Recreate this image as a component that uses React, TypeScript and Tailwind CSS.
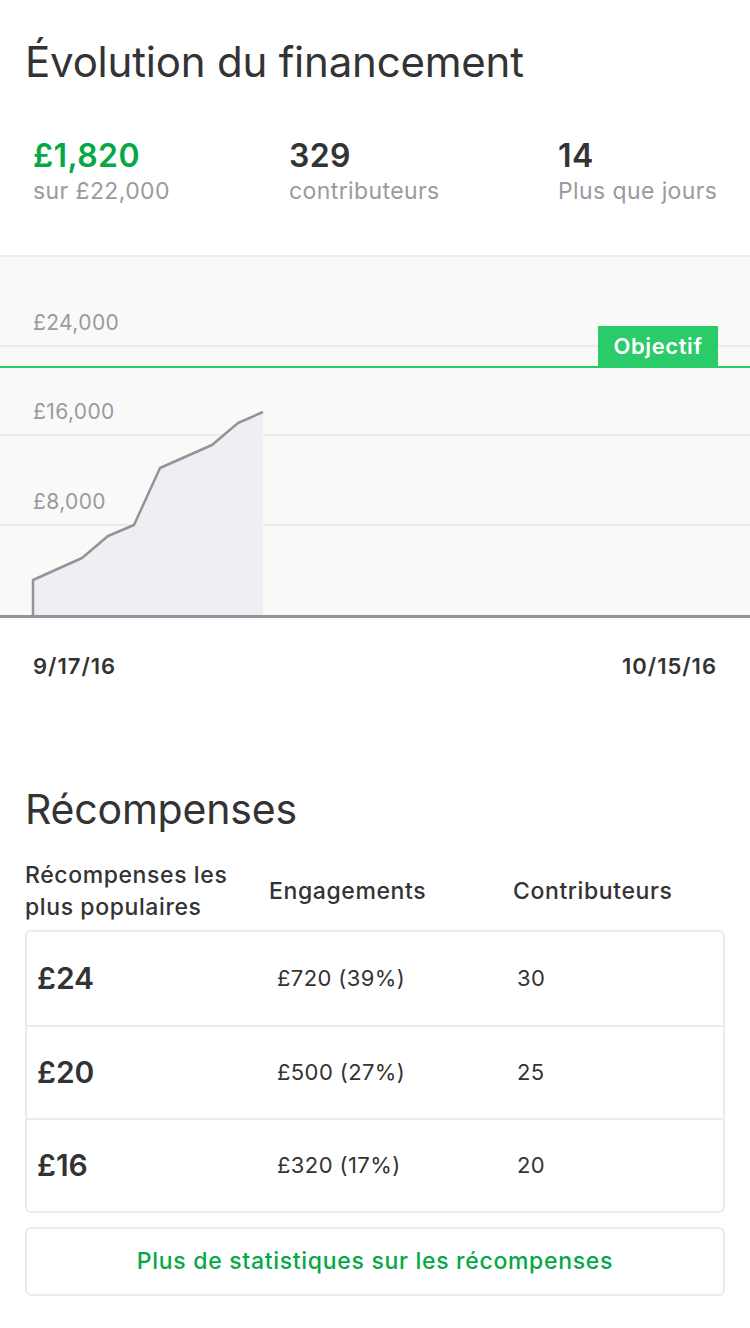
const points: [number, number][] = [
  [33, 323],
  [82, 301],
  [108, 279],
  [134, 268],
  [160, 211],
  [212, 188],
  [238, 166],
  [263, 155],
];

const rewards = [
  { amount: "£24", pledged: "£720 (39%)", backers: "30" },
  { amount: "£20", pledged: "£500 (27%)", backers: "25" },
  { amount: "£16", pledged: "£320 (17%)", backers: "20" },
];

function FundingChart() {
  const line = [[33, 358], ...points].map((p) => p.join(",")).join(" ");
  const area = [[33, 358], ...points, [263, 358]].map((p) => p.join(",")).join(" ");

  return (
    <div className="border-t-2 border-[#ededed]">
      <div className="relative h-[358px] bg-[#f9f9f8]">
        <svg className="absolute inset-0" width="750" height="358" viewBox="0 0 750 358">
          <line x1="0" y1="89" x2="750" y2="89" stroke="#ebebeb" strokeWidth="2" />
          <line x1="0" y1="178" x2="750" y2="178" stroke="#ebebeb" strokeWidth="2" />
          <line x1="0" y1="268" x2="750" y2="268" stroke="#ebebeb" strokeWidth="2" />
          <polygon points={area} fill="#eeeff2" />
          <polyline points={line} fill="none" stroke="#939399" strokeWidth="2.5" strokeLinejoin="round" />
          <line x1="0" y1="110" x2="750" y2="110" stroke="#2acb68" strokeWidth="2" />
        </svg>

        <span className="absolute left-[33px] top-[54px] text-[21px] leading-6 tracking-[0.4px] text-[#9a9aa0]">£24,000</span>
        <span className="absolute left-[33px] top-[143px] text-[21px] leading-6 tracking-[0.4px] text-[#9a9aa0]">£16,000</span>
        <span className="absolute left-[33px] top-[233px] text-[21px] leading-6 tracking-[0.4px] text-[#9a9aa0]">£8,000</span>

        <div className="absolute right-[32px] top-[69px] flex h-[41px] w-[120px] items-center justify-center bg-[#2acb68] text-[22px] font-semibold tracking-[0.6px] text-white">
          Objectif
        </div>
      </div>
      <div className="h-[3px] bg-[#939399]" />
      <div className="flex justify-between px-[33px] pt-[36px] text-[22px] font-semibold leading-6 tracking-[1px] text-[#333]">
        <span>9/17/16</span>
        <span>10/15/16</span>
      </div>
    </div>
  );
}

export default function App() {
  return (
    <div className="min-h-[1328px] bg-white font-['Inter',sans-serif] text-[#333]">
      {/* Header */}
      <h1 className="px-[25px] pt-[36px] text-[42px] font-normal leading-[52px] tracking-[-0.2px] text-[#333]">
        Évolution du financement
      </h1>

      {/* Stats */}
      <div className="grid grid-cols-[256px_269px_1fr] whitespace-nowrap px-[33px] pt-[48px] pb-[49px]">
        <div>
          <div className="text-[32px] font-semibold leading-10 tracking-[0.4px] text-[#05a845]">£1,820</div>
          <div className="text-[23px] leading-[30px] tracking-[0.4px] text-[#9a9aa0]">sur £22,000</div>
        </div>
        <div>
          <div className="text-[32px] font-semibold leading-10 tracking-[0.4px]">329</div>
          <div className="text-[23px] leading-[30px] tracking-[0.4px] text-[#9a9aa0]">contributeurs</div>
        </div>
        <div>
          <div className="text-[32px] font-semibold leading-10 tracking-[0.4px]">14</div>
          <div className="text-[23px] leading-[30px] tracking-[0.4px] text-[#9a9aa0]">Plus que jours</div>
        </div>
      </div>

      <FundingChart />

      {/* Rewards */}
      <div className="px-[25px] pt-[108px]">
        <h2 className="text-[41px] font-normal leading-[46px] tracking-[-0.2px]">Récompenses</h2>

        <div className="mt-[27px] grid grid-cols-[244px_244px_1fr] items-center whitespace-nowrap text-[23px] font-medium leading-8 tracking-[0.6px]">
          <div>
            Récompenses les
            <br />
            plus populaires
          </div>
          <div>Engagements</div>
          <div>Contributeurs</div>
        </div>

        <div className="mt-[7px] rounded-[6px] border-2 border-[#ebebef]">
          {rewards.map((r, i) => (
            <div
              key={r.amount}
              className={`grid h-[93px] grid-cols-[240px_240px_1fr] items-center pl-[10px] ${
                i > 0 ? "border-t-2 border-[#ebebef]" : ""
              }`}
            >
              <div className="text-[30px] font-semibold">{r.amount}</div>
              <div className="text-[22px] tracking-[0.4px]">{r.pledged}</div>
              <div className="text-[22px] tracking-[0.4px]">{r.backers}</div>
            </div>
          ))}
        </div>

        <button className="mt-[14px] flex h-[69px] w-full items-center justify-center rounded-[6px] border-2 border-[#ebebef] text-[23px] font-medium tracking-[0.7px] text-[#05a845]">
          Plus de statistiques sur les récompenses
        </button>
      </div>
    </div>
  );
}
